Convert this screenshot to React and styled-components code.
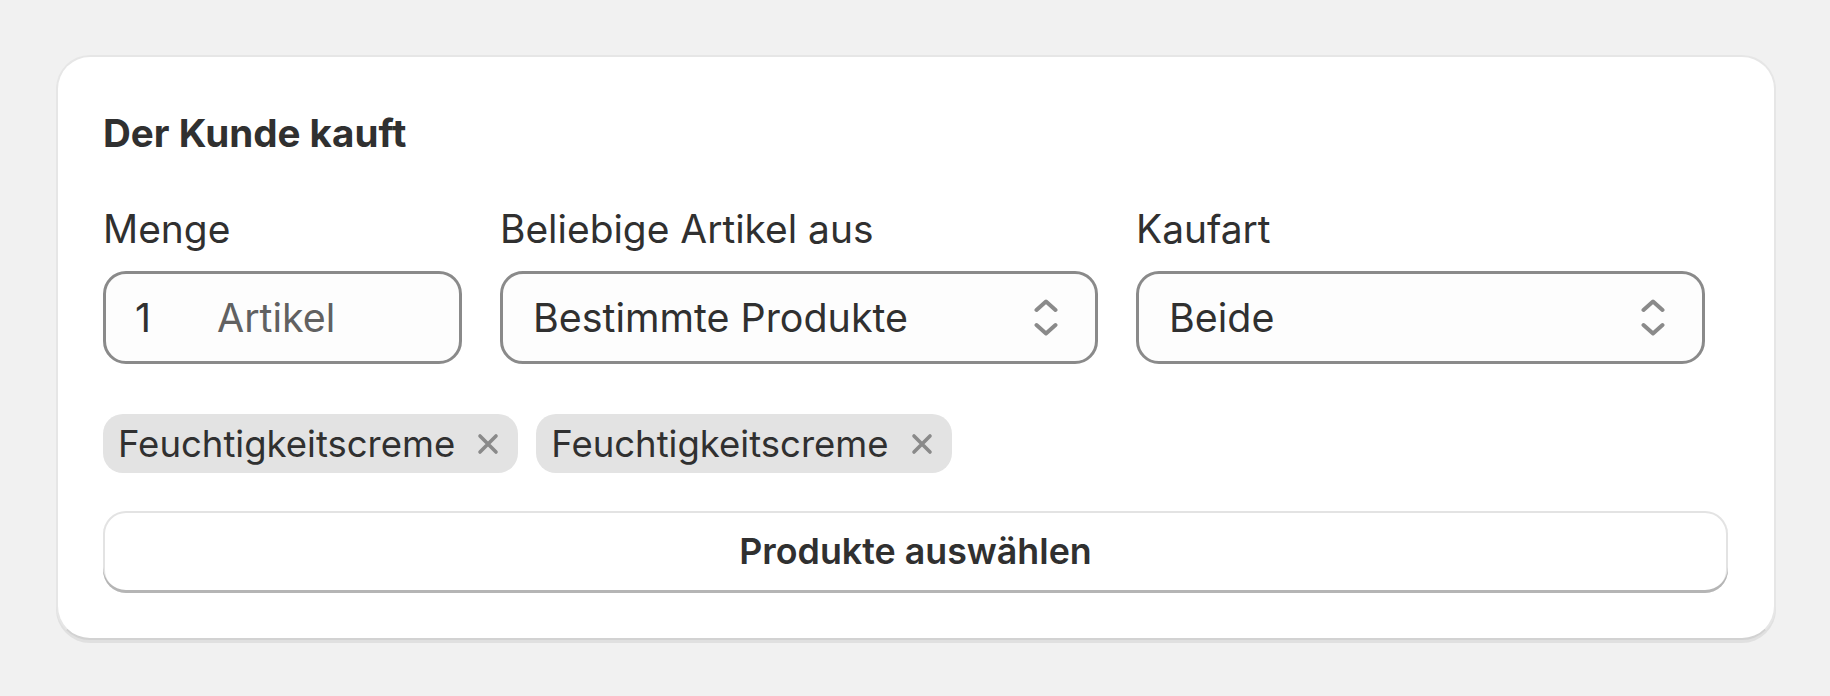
import React from "react";
import styled, { createGlobalStyle } from "styled-components";

const Global = createGlobalStyle`
  html, body { margin: 0; padding: 0; background: #f1f1f1; }
  body { font-family: Inter, "Noto Sans", "Liberation Sans", sans-serif; color: #303030; -webkit-font-smoothing: antialiased; }
  * { box-sizing: border-box; }
`;

const Page = styled.div`
  width: 1830px;
  height: 696px;
  padding: 55px 54px 0 56px;
`;

const Card = styled.section`
  background: #ffffff;
  border: 2px solid #e6e6e6;
  border-bottom-color: #d2d2d2;
  border-radius: 34px;
  box-shadow: 0 3px 0 0 #e0e0e0;
  padding: 47px 46px 45px 45px;
  display: flex;
  flex-direction: column;
`;

const Title = styled.h2`
  margin: 0;
  font-size: 38.6px;
  line-height: 58px;
  font-weight: 700;
  color: #303030;
`;

const FieldRow = styled.div`
  display: flex;
  gap: 38px;
  margin-top: 38px;
`;

const Field = styled.div`
  display: flex;
  flex-direction: column;
  width: ${(p) => p.$w}px;
`;

const Label = styled.label`
  font-size: 38.9px;
  line-height: 58px;
  color: #303030;
  margin-bottom: 13px;
`;

const Box = styled.div`
  height: 93px;
  border: 3px solid #8a8a8a;
  border-radius: 23px;
  background: #fdfdfd;
  display: flex;
  align-items: center;
  justify-content: ${(p) => (p.$select ? "space-between" : "flex-start")};
  padding: 0 ${(p) => (p.$select ? "37px" : "20px")} 0 ${(p) => (p.$select ? "30px" : "29px")};
  font-size: 39.4px;
  line-height: 58px;
  color: #303030;
`;

const Num = styled.span`
  width: 82px;
`;

const Suffix = styled.span`
  color: #616161;
`;

const Tags = styled.div`
  display: flex;
  gap: 18px;
  margin-top: 50px;
`;

const Tag = styled.div`
  height: 59px;
  border-radius: 20px;
  background: #e3e3e3;
  display: flex;
  align-items: center;
  gap: 22px;
  padding: 0 19px 0 15px;
  font-size: 36.5px;
  line-height: 58px;
  color: #303030;
`;

const Button = styled.button`
  margin-top: 38px;
  height: 82px;
  width: 100%;
  border: none;
  border-radius: 23px;
  background: #ffffff;
  box-shadow: inset 0 -3px 0 0 #b5b5b5, inset 0 0 0 2px #e3e3e3;
  font-family: inherit;
  font-size: 35.8px;
  font-weight: 600;
  color: #303030;
  padding: 0 0 2px;
  cursor: pointer;
`;

const SelectIcon = () => (
  <svg width="24" height="37" viewBox="0 0 24 37" fill="none">
    <polyline points="2.5,11 12,2.5 21.5,11" stroke="#8a8a8a" strokeWidth="4" strokeLinecap="round" strokeLinejoin="round" />
    <polyline points="2.5,26 12,34.5 21.5,26" stroke="#8a8a8a" strokeWidth="4" strokeLinecap="round" strokeLinejoin="round" />
  </svg>
);

const XIcon = () => (
  <svg width="22" height="22" viewBox="0 0 22 22" fill="none">
    <path d="M3 3L19 19M19 3L3 19" stroke="#8a8a8a" strokeWidth="3.6" strokeLinecap="round" />
  </svg>
);

export default function App() {
  return (
    <>
      <Global />
      <Page>
        <Card>
          <Title>Der Kunde kauft</Title>
          <FieldRow>
            <Field $w={359}>
              <Label>Menge</Label>
              <Box>
                <Num>1</Num>
                <Suffix>Artikel</Suffix>
              </Box>
            </Field>
            <Field $w={598}>
              <Label>Beliebige Artikel aus</Label>
              <Box $select>
                <span>Bestimmte Produkte</span>
                <SelectIcon />
              </Box>
            </Field>
            <Field $w={569}>
              <Label>Kaufart</Label>
              <Box $select>
                <span>Beide</span>
                <SelectIcon />
              </Box>
            </Field>
          </FieldRow>
          <Tags>
            <Tag>
              <span>Feuchtigkeitscreme</span>
              <XIcon />
            </Tag>
            <Tag>
              <span>Feuchtigkeitscreme</span>
              <XIcon />
            </Tag>
          </Tags>
          <Button>Produkte auswählen</Button>
        </Card>
      </Page>
    </>
  );
}
